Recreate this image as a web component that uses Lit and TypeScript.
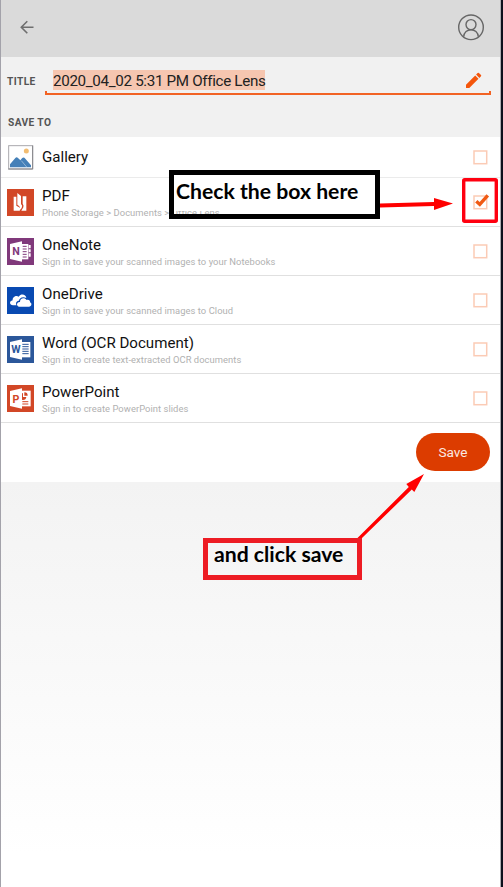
import { LitElement, html, css, svg, nothing } from "lit";
import { customElement, state } from "lit/decorators.js";

interface Destination {
  id: string;
  name: string;
  note?: string;
}

const DESTINATIONS: Destination[] = [
  { id: "gallery", name: "Gallery" },
  { id: "pdf", name: "PDF", note: "Phone Storage > Documents > Office Lens" },
  { id: "onenote", name: "OneNote", note: "Sign in to save your scanned images to your Notebooks" },
  { id: "onedrive", name: "OneDrive", note: "Sign in to save your scanned images to Cloud" },
  { id: "word", name: "Word (OCR Document)", note: "Sign in to create text-extracted OCR documents" },
  { id: "powerpoint", name: "PowerPoint", note: "Sign in to create PowerPoint slides" },
];

const ART: Record<string, unknown> = {
  gallery: svg`
    <rect x="5" y="5" width="72" height="70" fill="#fff" stroke="#aaa9ad" stroke-width="3"/>
    <path d="M4 75H77V5" fill="none" stroke="#85858a" stroke-width="3"/>
    <circle cx="58" cy="21" r="7.5" fill="#f2bd72"/>
    <path d="M9 70V61L25 42Q29 38 33 42L40 49L45 43Q50 38 55 44L72 64V70Z" fill="#4580b8"/>
    <path d="M43 50L59 69" stroke="#b9d0e5" stroke-width="2"/>`,
  pdf: svg`
    <rect width="81" height="81" fill="#d24726"/>
    <path d="M20 23H28V50Q36 53 40 58L38 65H20Z" fill="#fff"/>
    <path d="M31 12L42 21V45Q48 50 44 57L37 65Q41 57 37 52L31 47Z" fill="#fff"/>
    <path d="M47 22H58V65H43L49 55Q51 49 47 44Z" fill="#fff"/>`,
  onenote: svg`
    <rect width="81" height="81" fill="#80397b"/>
    <path d="M45 18H64V64H45Z" fill="#fff"/>
    <path d="M65 21H71V31H65ZM65 34H71V43H65ZM65 46H71V56H65Z" fill="#fff"/>
    <path d="M47 25H59M47 33H59M47 41H59M47 49H59M47 57H59" stroke="#80397b" stroke-width="3"/>
    <path d="M9 18L45 10V71L9 63Z" fill="#fff"/>
    <text x="27" y="52" class="glyph" fill="#80397b">N</text>`,
  onedrive: svg`
    <rect width="81" height="81" fill="#094ab2"/>
    <path d="M18 55C7 54 6 42 17 40C16 29 28 24 35 29C43 18 57 23 58 33C45 27 36 35 36 41C28 41 25 49 29 55Z" fill="#fff"/>
    <path d="M37 59C27 58 28 44 39 45C38 34 52 29 59 39C66 37 70 42 69 46C76 49 74 59 66 59Z" fill="#fff"/>`,
  word: svg`
    <rect width="81" height="81" fill="#2b579a"/>
    <path d="M45 18H70V64H45Z" fill="#fff"/>
    <path d="M46 25H65M46 32H65M46 39H65M46 46H65M46 53H65" stroke="#2b579a" stroke-width="3"/>
    <path d="M9 18L45 10V71L9 63Z" fill="#fff"/>
    <text x="27" y="52" class="glyph" fill="#2b579a">W</text>`,
  powerpoint: svg`
    <rect width="81" height="81" fill="#d24726"/>
    <path d="M45 17H71V64H45Z" fill="#fff"/>
    <path d="M46 25A10 10 0 1 0 58 36H48V24Z" fill="#d24726"/>
    <path d="M52 22V32H62A10 10 0 0 0 52 22Z" fill="#d24726"/>
    <path d="M46 50H64M46 57H64" stroke="#d24726" stroke-width="3"/>
    <path d="M9 18L45 10V71L9 63Z" fill="#fff"/>
    <text x="27" y="53" class="glyph" fill="#d24726">P</text>`,
};

@customElement("destination-row")
class DestinationRow extends LitElement {
  static properties = {
    item: { attribute: false },
    checked: { type: Boolean },
  };
  declare item: Destination;
  declare checked: boolean;

  static styles = css`
    :host {
      display: flex;
      align-items: center;
      box-sizing: border-box;
      height: 49px;
      padding: 0 12px 0 6px;
      border-bottom: 1px solid #e0e0e0;
      background: #fff;
    }
    .art { width: 27px; height: 27px; flex: none; display: block; }
    .glyph { font: 700 32px Roboto, sans-serif; text-anchor: middle; }
    .text { flex: 1; margin-left: 8px; white-space: nowrap; }
    .name { font-size: 15.1px; line-height: 18px; color: #111; }
    .name.noted { padding-top: 2px; }
    .note { font-size: 9.4px; letter-spacing: 0.055px; line-height: 12px; color: #b1b1b1; margin-top: 2px; }
    .box { flex: none; display: block; width: 16px; height: 16px; overflow: visible; }
  `;

  render() {
    return html`
      <svg class="art" viewBox="0 0 81 81">${ART[this.item.id]}</svg>
      <div class="text">
        <div class=${this.item.note ? "name noted" : "name"}>${this.item.name}</div>
        ${this.item.note ? html`<div class="note">${this.item.note}</div>` : nothing}
      </div>
      <svg class="box" viewBox="0 0 16 16" fill="none">
        <rect x="2" y="2" width="12.7" height="12.7" stroke="#fbcbb5" stroke-width="1.5"/>
        ${this.checked
          ? svg`<path d="M4.3 7.2L7.8 10.4L15.8 1.4" stroke="#f05a14" stroke-width="3.4"/>`
          : nothing}
      </svg>`;
  }
}

@customElement("app-root")
class AppRoot extends LitElement {
  @state() private selected = "pdf";

  static styles = css`
    :host {
      display: block;
      position: relative;
      box-sizing: border-box;
      width: 503px;
      height: 887px;
      overflow: hidden;
      border-left: 1px solid #a3a2aa;
      border-right: 2px solid #0d0f1c;
      background: #fff;
      font-family: Roboto, sans-serif;
    }
    .screen {
      box-sizing: border-box;
      height: 887px;
      display: flex;
      flex-direction: column;
      border-right: 1px solid #aeaeb2;
    }
    .bar {
      box-sizing: border-box;
      height: 57px;
      flex: none;
      display: flex;
      align-items: center;
      justify-content: space-between;
      padding: 0 15px 3px 19px;
      background: #dadada;
    }
    .back { width: 14px; height: 14px; }
    .user { width: 28px; height: 28px; }
    .form { height: 80px; flex: none; background: #f1f1f1; }
    .title-row { display: flex; align-items: flex-start; padding: 11px 9px 0 6px; }
    .label { font-size: 10.2px; font-weight: 700; letter-spacing: 0.4px; line-height: 14px; color: #555; }
    .title-row .label { width: 38px; margin-top: 7px; }
    .field {
      flex: 1;
      box-sizing: border-box;
      height: 27px;
      display: flex;
      justify-content: space-between;
      align-items: flex-start;
      padding: 2px 9px 0 8px;
      border-bottom: 2px solid #f26324;
      position: relative;
    }
    .field::before, .field::after {
      content: "";
      position: absolute;
      bottom: 0;
      width: 2px;
      height: 2px;
      background: #f26324;
    }
    .field::before { left: 0; }
    .field::after { right: 0; }
    .value {
      font-size: 15.2px;
      letter-spacing: -0.33px;
      line-height: 18px;
      padding-top: 2px;
      color: #222;
      background: #f6c6b0;
      white-space: nowrap;
    }
    .pencil { width: 17px; height: 17px; margin-top: 2px; }
    .save-to { padding: 21px 0 0 7px; }
    .list { flex: none; }
    destination-row.short { height: 41px; border-bottom: 1.5px solid #ebebeb; }
    .actions {
      height: 59px;
      flex: none;
      display: flex;
      align-items: flex-start;
      justify-content: flex-end;
      padding-right: 10px;
      box-sizing: border-box;
      padding-top: 10px;
    }
    .save {
      width: 74px;
      height: 38px;
      border: 0;
      border-radius: 19px;
      padding: 1px 0 0;
      background: #dc3c00;
      color: #fbe9e2;
      font: 400 13.6px/37px Roboto, sans-serif;
    }
    .rest { flex: 1; background: linear-gradient(#f3f3f3, #fff 92%); }
    .callout {
      position: absolute;
      box-sizing: border-box;
      border: 5px solid #000;
      font: 700 21.2px/26px Lato, "Liberation Sans", sans-serif;
      color: #000;
      white-space: nowrap;
    }
    .check-note { left: 168px; top: 170px; width: 211px; height: 49px; }
    .check-note .words { display: block; height: 36px; line-height: 33px; background: #fff; padding-left: 2px; }
    .save-note { left: 202px; top: 538px; width: 159px; height: 42px; border-color: #ed1c24; padding-left: 6px; line-height: 23px; }
    .ring { position: absolute; left: 461px; top: 178px; width: 36px; height: 45px; }
    .arrows { position: absolute; left: 0; top: 0; width: 500px; height: 887px; pointer-events: none; }
  `;

  render() {
    return html`
      <div class="screen">
        <header class="bar">
          <svg class="back" viewBox="0 0 14 14" fill="none" stroke="#6e6e6e" stroke-width="1.6"><path d="M13.5 7.3H1.5M7.3 1.3L1.3 7.3L7.3 13.3"/></svg>
          <svg class="user" viewBox="0 0 28 28" fill="none" stroke="#666" stroke-width="1.4">
            <circle cx="14" cy="14.3" r="12.3"/><circle cx="14" cy="11.6" r="5"/>
            <path d="M6.7 23.8C7 14.3 21 14.3 21.3 23.8"/>
          </svg>
        </header>
        <section class="form">
          <div class="title-row">
            <span class="label">TITLE</span>
            <div class="field">
              <span class="value">2020_04_02 5:31 PM Office Lens</span>
              <svg class="pencil" viewBox="0 0 17 17" fill="#f4560c"><path d="M1 12.7L10.2 3.5L13.5 6.8L4.3 16H1ZM11.1 2.6L12.7 1Q13.3 .5 13.9 1L16 3.1Q16.5 3.7 16 4.3L14.4 5.9Z"/></svg>
            </div>
          </div>
          <div class="label save-to">SAVE TO</div>
        </section>
        <main class="list">
          ${DESTINATIONS.map(
            (d) => html`<destination-row
              class=${d.note ? "" : "short"}
              .item=${d}
              .checked=${d.id === this.selected}
              @click=${() => (this.selected = d.id)}
            ></destination-row>`
          )}
        </main>
        <div class="actions"><button class="save">Save</button></div>
        <div class="rest"></div>
      </div>
      <div class="callout check-note"><span class="words">Check the box here</span></div>
      <div class="callout save-note">and click save</div>
      <svg class="ring" viewBox="0 0 36 45" fill="none"><rect x="1.7" y="1.7" width="32.6" height="41.6" rx="1" stroke="#ff0010" stroke-width="3.4"/></svg>
      <svg class="arrows" viewBox="1 0 500 887" fill="#f00" stroke="none">
        <path d="M380 203.6L434 202V198L453 203.5L434 210V206L380 207.4Z"/>
        <path d="M357.5 538L408.8 487L406.3 484L424 474L414.3 492L411.8 489.5L362 538Z"/>
      </svg>`;
  }
}
